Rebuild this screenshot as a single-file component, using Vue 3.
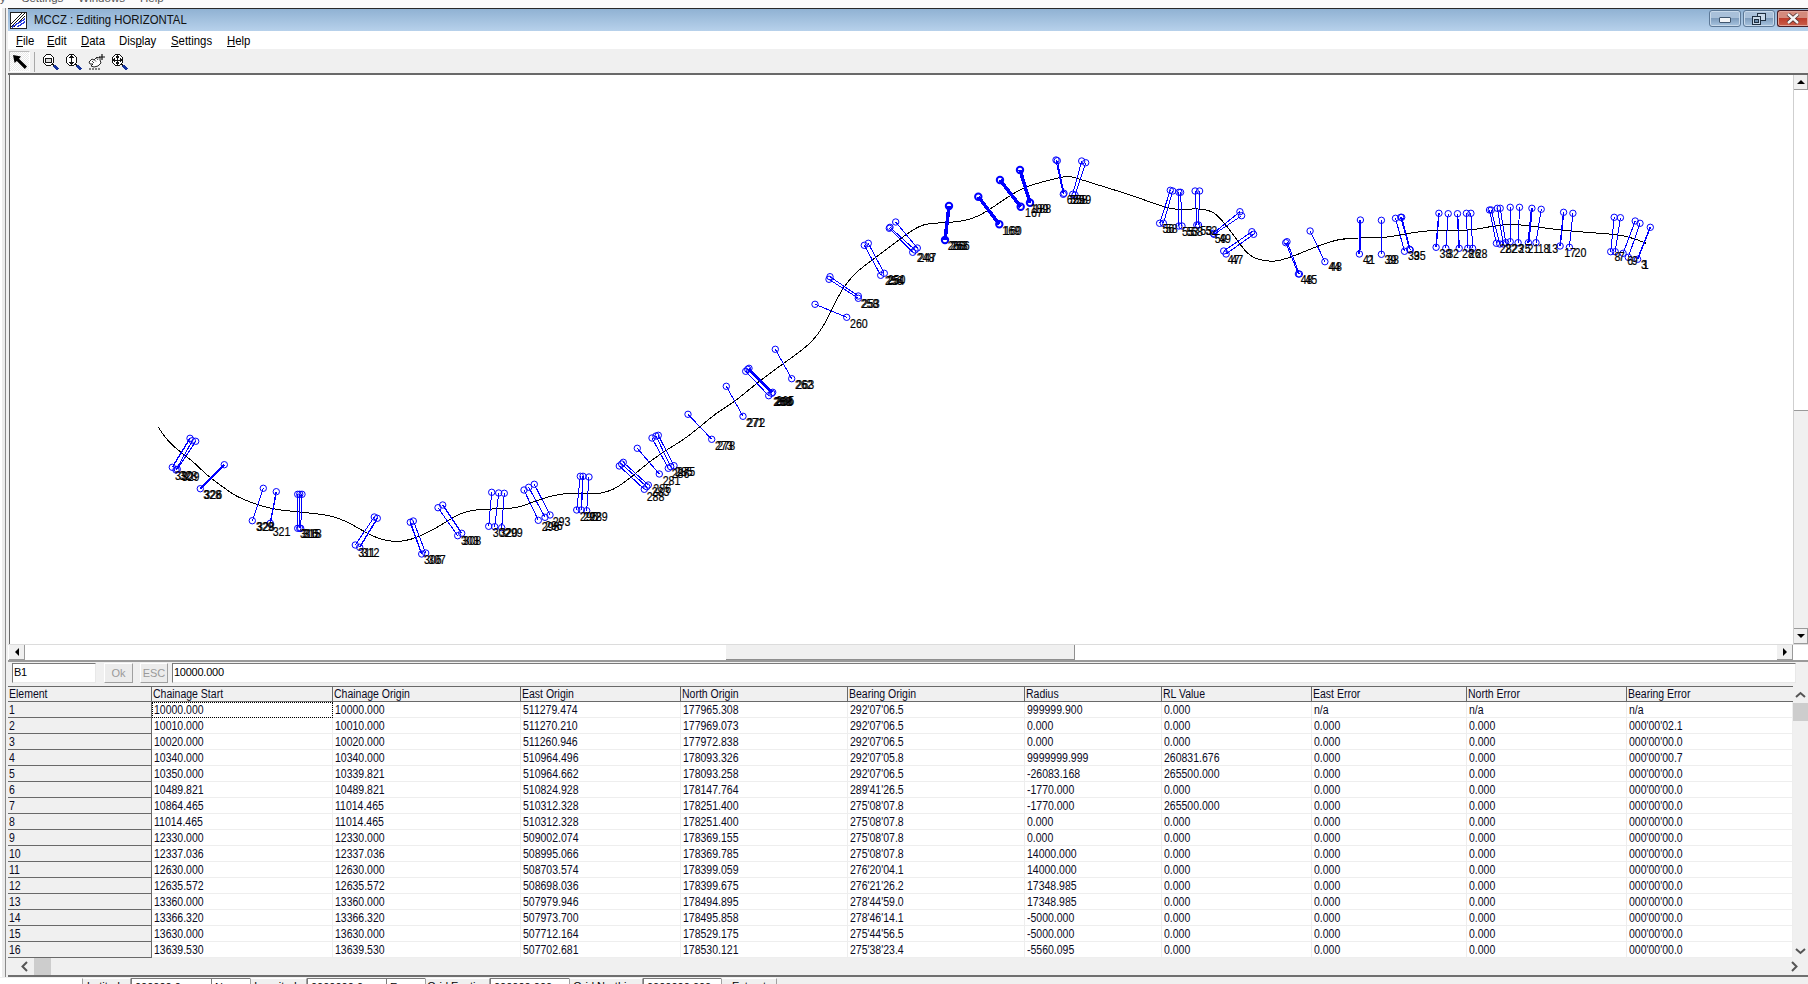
<template>
  <div class="desk">
    <div class="parent-menu">
      <span class="pm-y">y</span>
      <span>Settings</span>
      <span>Windows</span>
      <span>Help</span>
    </div>

    <div class="mdi">
      <div class="mdi-edge"></div>
      <div class="win">
        <div class="titlebar">
          <svg class="app-icon" width="18" height="18" viewBox="0 0 18 18" shape-rendering="crispEdges">
            <rect x="1" y="1" width="16" height="16" fill="#fff" stroke="#222" />
            <path d="M2 13 13 2M2 16 16 2M5 16 16 5" stroke="#111" stroke-width="1.4" />
            <path d="M3 16 16 8M8 16 16 11" stroke="#2a3ee0" stroke-width="1.4" />
          </svg>
          <span class="title-text squish">MCCZ : Editing HORIZONTAL</span>
          <div class="caption-btns">
            <div class="cap-btn">
              <div class="cap-min"></div>
            </div>
            <div class="cap-btn">
              <svg width="14" height="12" viewBox="0 0 14 12" shape-rendering="crispEdges">
                <rect x="5.5" y="0.5" width="8" height="7" fill="#c8d8e8" stroke="#1f2f40" />
                <rect x="0.5" y="3.5" width="8" height="8" fill="#c8d8e8" stroke="#1f2f40" />
                <rect x="2.5" y="6.5" width="4" height="3" fill="#6d8cab" stroke="#1f2f40" />
              </svg>
            </div>
            <div class="cap-btn cap-close">
              <svg width="14" height="11" viewBox="0 0 14 11">
                <path d="M2 1 12 10M12 1 2 10" stroke="#4a2a2a" stroke-width="4" />
                <path d="M2 1 12 10M12 1 2 10" stroke="#f4f4f4" stroke-width="2.4" />
              </svg>
            </div>
          </div>
        </div>

        <div class="menubar">
          <span v-for="m in menus" :key="m.before + m.key + m.after" class="squish">{{ m.before }}<u>{{ m.key }}</u>{{ m.after }}</span>
        </div>

        <div class="toolbar">
          <div class="tool-pressed">
            <svg width="16" height="16" viewBox="0 0 16 16">
              <path d="M1 1 9 2.5 7 4.8 15 12.6 12.8 15 4.8 7 2.6 9Z" fill="#000" />
            </svg>
          </div>
          <div class="tool-sep"></div>
          <svg class="tool" width="18" height="18" viewBox="0 0 18 18" shape-rendering="crispEdges">
            <circle cx="6.5" cy="7" r="5.5" fill="#fff" stroke="#111" />
            <rect x="3.5" y="5" width="6" height="4" fill="#ddd" stroke="#111" />
            <path d="M10.5 11 12 12.5" stroke="#111" stroke-width="1.5" />
            <path d="M12 12.5 16 16.5" stroke="#14329c" stroke-width="3" />
          </svg>
          <svg class="tool" width="18" height="18" viewBox="0 0 18 18" shape-rendering="crispEdges">
            <circle cx="6.5" cy="7" r="5.5" fill="#fff" stroke="#111" />
            <path d="M6.5 3v8M4.5 5 6.5 3 8.5 5M4.5 9 6.5 11 8.5 9" fill="none" stroke="#111" />
            <path d="M10.5 11 12 12.5" stroke="#111" stroke-width="1.5" />
            <path d="M12 12.5 16 16.5" stroke="#14329c" stroke-width="3" />
          </svg>
          <svg class="tool" width="18" height="18" viewBox="0 0 18 18">
            <path d="M1 9 4 6 6 7 9 4 10 5 12 4 12 7 13 10 10 13 6 14 3 13 5 11 2 11Z" fill="#fff" stroke="#111" stroke-width=".9" />
            <path d="M4 8 6 10M6 6.5 8 8.5M8.5 5 10 7" stroke="#111" stroke-width=".8" />
            <path d="M1 16h11" stroke="#111" stroke-dasharray="2 1" />
            <path d="M14 1v6M11 4h6" stroke="#111" stroke-width="1.2" />
          </svg>
          <svg class="tool" width="18" height="18" viewBox="0 0 18 18" shape-rendering="crispEdges">
            <circle cx="6.5" cy="7" r="5.5" fill="#fff" stroke="#111" />
            <path d="M6.5 3v8M2.5 7h8M5 4.5 6.5 3 8 4.5M5 9.5 6.5 11 8 9.5M4 5.5 2.5 7 4 8.5M9 5.5 10.5 7 9 8.5" fill="none" stroke="#111" />
            <path d="M10.5 11 12 12.5" stroke="#111" stroke-width="1.5" />
            <path d="M12 12.5 16 16.5" stroke="#14329c" stroke-width="3" />
          </svg>
        </div>

        <div class="view-row">
          <svg class="canvas" viewBox="10 75 1783 569" width="1783" height="569">
            <path class="road" :d="roadPath" />
            <g v-for="(t, i) in ticks" :key="'t' + i">
              <line class="tick" :stroke-width="t.w" :x1="t.x1" :y1="t.y1" :x2="t.x2" :y2="t.y2" />
              <circle class="node" :stroke-width="t.nw" :cx="t.x1" :cy="t.y1" r="3.2" />
              <circle class="node" :stroke-width="t.nw" :cx="t.x2" :cy="t.y2" r="3.2" />
            </g>
            <text v-for="(l, i) in labels" :key="'l' + i" class="label" :transform="`translate(${l.x} ${l.y}) scale(.82 1)`">{{ l.t }}</text>
          </svg>
          <div class="vscroll">
            <div class="sb-btn"><i class="arrow-up"></i></div>
            <div class="vtrack-a"></div>
            <div class="vthumb"></div>
            <div class="sb-btn"><i class="arrow-down"></i></div>
          </div>
        </div>

        <div class="hscroll">
          <div class="sb-btn sb-h"><i class="arrow-left"></i></div>
          <div class="htrack htrack-a"></div>
          <div class="hthumb"></div>
          <div class="htrack"></div>
          <div class="sb-btn sb-h"><i class="arrow-right"></i></div>
        </div>

        <div class="edit-row">
          <input class="cell-name" type="text" value="B1" />
          <div class="mini-btn ok-btn">Ok</div>
          <div class="mini-btn esc-btn">ESC</div>
          <input class="cell-value" type="text" value="10000.000" />
        </div>

        <div class="grid-row">
          <table class="grid">
            <colgroup>
              <col v-for="c in colWidths" :key="c.name" :style="{ width: c.width + 'px' }" />
            </colgroup>
            <thead>
              <tr>
                <th v-for="c in colWidths" :key="c.name"><span class="squish">{{ c.name }}</span></th>
              </tr>
            </thead>
            <tbody>
              <tr v-for="(row, r) in rows" :key="row[0]">
                <td v-for="(val, i) in row" :key="i" :class="{ fixed: i === 0, focus: r === 0 && i === 1 }"><span class="squish">{{ val }}</span></td>
              </tr>
            </tbody>
          </table>
          <div class="grid-vscroll">
            <svg width="15" height="15" viewBox="0 0 15 15"><path d="M3 9 7.5 5 12 9" fill="none" stroke="#555" stroke-width="2" /></svg>
            <div class="grid-vthumb"></div>
            <div class="grid-vspace"></div>
            <svg width="15" height="15" viewBox="0 0 15 15"><path d="M3 6 7.5 10 12 6" fill="none" stroke="#555" stroke-width="2" /></svg>
          </div>
        </div>

        <div class="grid-hscroll">
          <svg width="18" height="17" viewBox="0 0 18 17"><path d="M11 4 6.5 8.5 11 13" fill="none" stroke="#555" stroke-width="2" /></svg>
          <div class="grid-hthumb"></div>
          <div class="grid-hspace"></div>
          <svg width="23" height="17" viewBox="0 0 23 17"><path d="M7 4 11.5 8.5 7 13" fill="none" stroke="#555" stroke-width="2" /></svg>
        </div>
      </div>
    </div>

    <div class="status">
      <div class="st-blank"></div>
      <template v-for="s in statusItems" :key="s.text">
        <div :class="s.kind" :style="{ width: s.width + 'px' }">{{ s.text }}</div>
      </template>
    </div>
  </div>
</template>

<script setup>
const menus = [
  { before: '', key: 'F', after: 'ile' },
  { before: '', key: 'E', after: 'dit' },
  { before: '', key: 'D', after: 'ata' },
  { before: 'Dis', key: 'p', after: 'lay' },
  { before: '', key: 'S', after: 'ettings' },
  { before: '', key: 'H', after: 'elp' }
]

const colWidths = [
  { name: 'Element', width: 144 },
  { name: 'Chainage Start', width: 181 },
  { name: 'Chainage Origin', width: 188 },
  { name: 'East Origin', width: 160 },
  { name: 'North Origin', width: 167 },
  { name: 'Bearing Origin', width: 177 },
  { name: 'Radius', width: 137 },
  { name: 'RL Value', width: 150 },
  { name: 'East Error', width: 155 },
  { name: 'North Error', width: 160 },
  { name: 'Bearing Error', width: 166 }
]

const rows = [
  ['1', '10000.000', '10000.000', '511279.474', '177965.308', "292'07'06.5", '999999.900', '0.000', 'n/a', 'n/a', 'n/a'],
  ['2', '10010.000', '10010.000', '511270.210', '177969.073', "292'07'06.5", '0.000', '0.000', '0.000', '0.000', "000'00'02.1"],
  ['3', '10020.000', '10020.000', '511260.946', '177972.838', "292'07'06.5", '0.000', '0.000', '0.000', '0.000', "000'00'00.0"],
  ['4', '10340.000', '10340.000', '510964.496', '178093.326', "292'07'05.8", '9999999.999', '260831.676', '0.000', '0.000', "000'00'00.7"],
  ['5', '10350.000', '10339.821', '510964.662', '178093.258', "292'07'06.5", '-26083.168', '265500.000', '0.000', '0.000', "000'00'00.0"],
  ['6', '10489.821', '10489.821', '510824.928', '178147.764', "289'41'26.5", '-1770.000', '0.000', '0.000', '0.000', "000'00'00.0"],
  ['7', '10864.465', '11014.465', '510312.328', '178251.400', "275'08'07.8", '-1770.000', '265500.000', '0.000', '0.000', "000'00'00.0"],
  ['8', '11014.465', '11014.465', '510312.328', '178251.400', "275'08'07.8", '0.000', '0.000', '0.000', '0.000', "000'00'00.0"],
  ['9', '12330.000', '12330.000', '509002.074', '178369.155', "275'08'07.8", '0.000', '0.000', '0.000', '0.000', "000'00'00.0"],
  ['10', '12337.036', '12337.036', '508995.066', '178369.785', "275'08'07.8", '14000.000', '0.000', '0.000', '0.000', "000'00'00.0"],
  ['11', '12630.000', '12630.000', '508703.574', '178399.059', "276'20'04.1", '14000.000', '0.000', '0.000', '0.000', "000'00'00.0"],
  ['12', '12635.572', '12635.572', '508698.036', '178399.675', "276'21'26.2", '17348.985', '0.000', '0.000', '0.000', "000'00'00.0"],
  ['13', '13360.000', '13360.000', '507979.946', '178494.895', "278'44'59.0", '17348.985', '0.000', '0.000', '0.000', "000'00'00.0"],
  ['14', '13366.320', '13366.320', '507973.700', '178495.858', "278'46'14.1", '-5000.000', '0.000', '0.000', '0.000', "000'00'00.0"],
  ['15', '13630.000', '13630.000', '507712.164', '178529.175', "275'44'56.5", '-5000.000', '0.000', '0.000', '0.000', "000'00'00.0"],
  ['16', '13639.530', '13639.530', '507702.681', '178530.121', "275'38'23.4", '-5560.095', '0.000', '0.000', '0.000', "000'00'00.0"]
]

const statusItems = [
  { kind: 'st-label', text: 'Latitude', width: 49 },
  { kind: 'st-input', text: '000000.0', width: 80 },
  { kind: 'st-input', text: 'N', width: 39 },
  { kind: 'st-label', text: 'Longitude', width: 57 },
  { kind: 'st-input', text: '0000000.0', width: 79 },
  { kind: 'st-input', text: 'E', width: 39 },
  { kind: 'st-label', text: 'Grid Easting', width: 65 },
  { kind: 'st-input', text: '000000.000', width: 79 },
  { kind: 'st-label', text: 'Grid Northing', width: 74 },
  { kind: 'st-input', text: '0000000.000', width: 78 },
  { kind: 'st-label', text: 'Extract', width: 56 }
]

// drawing data, each block measured in its own zoomed frame
const sheets = [
  {
    ox: 140, oy: 400, sx: 3,
    road: [[55, 82], [80, 120], [120, 155], [160, 185], [200, 225], [250, 262], [290, 290], [340, 310], [400, 328], [470, 335], [540, 342], [590, 352], [640, 375], [690, 405], [730, 420], [770, 425], [810, 420], [860, 400], [920, 365], [960, 340], [1010, 328], [1070, 327], [1130, 325], [1180, 305], [1240, 285], [1300, 278], [1370, 282]],
    ticks: [
      [150, 115, 97, 202, 1.4], [157, 122, 108, 210, 1], [167, 124, 112, 208, 1],
      [253, 194, 181, 266, 2],
      [370, 265, 337, 362, 1],
      [409, 275, 391, 370, 1.4],
      [473, 283, 473, 385, 1.4], [479, 283, 479, 385, 1.4], [486, 283, 482, 385, 1],
      [703, 351, 646, 435, 1], [712, 355, 659, 442, 1.4],
      [811, 367, 845, 462, 1.4], [820, 363, 857, 459, 1],
      [894, 323, 953, 407, 1], [908, 315, 965, 400, 1.4],
      [1055, 277, 1046, 379, 1], [1076, 279, 1064, 380, 1], [1093, 280, 1085, 383, 1],
      [1152, 270, 1195, 361, 1], [1166, 262, 1215, 352, 1], [1183, 253, 1230, 345, 1],
      [1321, 229, 1310, 330, 1], [1329, 229, 1324, 330, 1.4], [1347, 231, 1340, 332, 1]
    ],
    labels: [
      [105, 240, '330'], [118, 240, '328'], [125, 243, '329'],
      [190, 298, '328'], [193, 298, '326'],
      [348, 394, '329'], [351, 394, '328'], [398, 407, '321'],
      [480, 415, '316'], [487, 415, '315'], [492, 415, '318'],
      [655, 472, '311'], [665, 472, '312'],
      [852, 493, '306'], [864, 493, '307'],
      [963, 435, '303'], [970, 435, '308'],
      [1058, 410, '302'], [1080, 412, '320'], [1095, 412, '299'],
      [1205, 392, '298'], [1215, 390, '296'], [1238, 378, '293'],
      [1320, 362, '295'], [1330, 362, '292'], [1350, 362, '289']
    ]
  },
  {
    ox: 600, oy: 330, sx: 3,
    road: [[0, 490], [40, 480], [90, 445], [130, 410], [190, 365], [250, 330], [300, 290], [350, 248], [400, 218], [470, 160], [530, 115]],
    ticks: [
      [58, 408, 133, 478, 1], [70, 397, 145, 465, 1], [65, 402, 140, 470, 1],
      [112, 355, 178, 432, 1],
      [156, 324, 205, 415, 1], [168, 318, 212, 410, 1], [175, 316, 222, 407, 1],
      [264, 253, 335, 328, 1],
      [379, 169, 429, 259, 1],
      [437, 124, 506, 197, 1], [443, 118, 515, 190, 1], [447, 115, 518, 187, 1],
      [526, 58, 575, 146, 1]
    ],
    labels: [
      [140, 512, '288'], [155, 497, '283'], [160, 490, '286'],
      [188, 465, '281'],
      [215, 445, '286'], [225, 437, '285'], [232, 437, '275'],
      [345, 360, '273'], [352, 360, '278'],
      [438, 291, '271'], [442, 291, '272'],
      [520, 228, '269'], [523, 228, '268'], [526, 228, '266'], [529, 226, '265'],
      [585, 178, '262'], [589, 178, '263']
    ]
  },
  {
    ox: 800, oy: 140, sx: 3,
    road: [[10, 628], [40, 600], [70, 560], [100, 500], [130, 440], [175, 390], [230, 350], [290, 305], [340, 268], [380, 250], [450, 248], [510, 240], [560, 215], [610, 180], [670, 142], [730, 125], [780, 112], [810, 108], [840, 118], [960, 155]],
    ticks: [
      [45, 493, 140, 532, 1],
      [87, 418, 175, 475, 1], [90, 410, 175, 468, 1],
      [193, 316, 242, 406, 1], [205, 310, 253, 400, 1],
      [268, 265, 338, 337, 1], [287, 246, 352, 324, 1], [270, 262, 345, 330, 1],
      [447, 198, 435, 300, 3.5],
      [535, 170, 598, 253, 3.5],
      [600, 120, 662, 200, 3.5],
      [660, 90, 690, 188, 3.5],
      [768, 60, 790, 163, 1], [772, 62, 792, 160, 1], [845, 63, 818, 163, 1], [857, 68, 825, 165, 1]
    ],
    labels: [
      [150, 563, '260'],
      [182, 503, '258'], [186, 503, '253'],
      [255, 435, '256'], [260, 435, '254'], [263, 433, '250'],
      [350, 367, '248'], [355, 365, '247'],
      [443, 330, '268'], [450, 330, '263'], [456, 330, '266'],
      [607, 285, '169'], [612, 285, '160'],
      [675, 232, '167'], [692, 218, '189'], [700, 218, '188'],
      [800, 192, '629'], [810, 192, '558'], [820, 192, '559']
    ]
  },
  {
    ox: 1140, oy: 170, sx: 2.904,
    road: [[0, 85], [75, 113], [120, 120], [170, 115], [215, 125], [250, 165], [285, 215], [320, 262], [380, 277], [430, 265], [500, 235], [570, 208], [640, 203], [720, 203], [800, 185], [880, 180], [960, 182], [1040, 165], [1100, 163], [1180, 175], [1280, 186], [1370, 192], [1420, 200], [1470, 220]],
    ticks: [
      [88, 61, 57, 160, 1], [95, 63, 68, 160, 1],
      [113, 67, 113, 168, 1], [118, 67, 122, 168, 1],
      [160, 63, 165, 165, 1], [173, 63, 170, 165, 1],
      [290, 125, 213, 190, 1], [295, 137, 215, 193, 1],
      [325, 185, 243, 243, 1], [330, 193, 250, 252, 1],
      [423, 218, 460, 312, 1], [427, 215, 463, 312, 1],
      [494, 183, 537, 275, 1],
      [640, 150, 637, 252, 2],
      [701, 151, 701, 253, 1],
      [742, 145, 768, 244, 1], [757, 142, 783, 238, 1], [760, 142, 785, 240, 1],
      [868, 130, 860, 232, 1.5], [895, 131, 888, 235, 1], [922, 131, 927, 235, 1.5], [948, 130, 952, 235, 1], [961, 130, 966, 235, 1],
      [1015, 120, 1035, 220, 1], [1020, 120, 1045, 222, 1], [1038, 115, 1055, 222, 1], [1046, 115, 1062, 218, 1], [1075, 112, 1075, 215, 1], [1102, 112, 1098, 218, 1], [1138, 115, 1128, 218, 2], [1165, 118, 1150, 218, 1],
      [1230, 127, 1220, 228, 1.5], [1257, 130, 1247, 232, 1],
      [1377, 142, 1367, 245, 1], [1395, 143, 1380, 245, 1], [1438, 153, 1403, 250, 1], [1452, 160, 1418, 262, 1], [1482, 172, 1445, 268, 1.5]
    ],
    labels: [
      [65, 190, '56'], [75, 190, '58'],
      [122, 197, '55'], [135, 197, '53'], [148, 197, '58'],
      [175, 195, '53'], [190, 195, '52'],
      [217, 220, '59'], [230, 220, '49'],
      [255, 282, '47'], [265, 282, '47'],
      [467, 342, '48'], [480, 342, '45'],
      [547, 303, '44'], [552, 303, '48'],
      [648, 283, '41'], [660, 283, '2'],
      [710, 283, '39'], [718, 283, '38'],
      [778, 270, '39'], [795, 270, '35'],
      [870, 263, '38'], [892, 263, '32'], [935, 263, '28'], [955, 263, '26'], [975, 263, '28'],
      [1045, 250, '28'], [1060, 250, '22'], [1080, 248, '23'], [1100, 248, '25'], [1125, 248, '21'], [1155, 250, '18'], [1180, 250, '13'],
      [1232, 262, '17'], [1262, 262, '20'],
      [1378, 273, '8'], [1390, 273, '7'], [1415, 285, '6'], [1428, 285, '9'], [1455, 297, '3'], [1460, 297, '1']
    ]
  }
]

const px = (s, v) => +(s.ox + v / s.sx).toFixed(1)
const py = (s, v) => +(s.oy + v / 3).toFixed(1)

// quadratic through the midpoints, keeps the alignment from looking polygonal
const roadPts = sheets.flatMap(s => s.road.map(p => [px(s, p[0]), py(s, p[1])]))
const roadPath = roadPts.reduce((d, p, i) => {
  if (i === 0) return `M${p[0]} ${p[1]}`
  const next = roadPts[i + 1]
  if (!next) return `${d} L${p[0]} ${p[1]}`
  const mx = ((p[0] + next[0]) / 2).toFixed(1)
  const my = ((p[1] + next[1]) / 2).toFixed(1)
  return `${d} Q${p[0]} ${p[1]} ${mx} ${my}`
}, '')

const ticks = sheets.flatMap(s => s.ticks.map(t => ({
  x1: px(s, t[0]),
  y1: py(s, t[1]),
  x2: px(s, t[2]),
  y2: py(s, t[3]),
  w: t[4],
  nw: t[4] > 3 ? 2 : 1
})))

const labels = sheets.flatMap(s => s.labels.map(l => ({
  x: px(s, l[0]),
  y: py(s, l[1]),
  t: l[2]
})))
</script>

<style>
html,
body {
  margin: 0;
  background: #f0f0f0;
}
</style>

<style scoped>
.desk {
  width: 1808px;
  height: 984px;
  display: flex;
  flex-direction: column;
  overflow: hidden;
  font-family: "Liberation Sans", Arial, sans-serif;
  color: #000;
  background: #f0f0f0;
}

/* the screenshot's text is squeezed sideways, plain font sizes come out too short */
.squish {
  display: inline-block;
  transform: scaleX(0.875);
  transform-origin: left center;
  white-space: nowrap;
}

.parent-menu {
  height: 8px;
  flex: none;
  overflow: hidden;
  background: #fbfbfb;
  display: flex;
  font-size: 11.5px;
  line-height: 12px;
  color: #555;
}

.parent-menu span {
  margin-top: -8px;
  margin-right: 15px;
}

.parent-menu .pm-y {
  margin-right: 16px;
}

.mdi {
  height: 969px;
  flex: none;
  display: flex;
}

.mdi-edge {
  width: 6px;
  margin-right: 2px;
  flex: none;
  box-sizing: border-box;
  background: #ececec;
  border-right: 1px solid #8a8a8a;
  border-left: 2px solid #fff;
}

.win {
  width: 1800px;
  display: flex;
  flex-direction: column;
  border-top: 1px solid #2a2a2a;
  border-bottom: 2px solid #6f6f6f;
  box-sizing: border-box;
}

.titlebar {
  height: 22px;
  flex: none;
  display: flex;
  align-items: center;
  background: linear-gradient(#90b2d3, #b7d1eb);
}

.app-icon {
  margin-left: 1px;
  margin-right: 7px;
}

.title-text {
  font-size: 13px;
  line-height: 15px;
  margin-bottom: 2px;
  color: #111;
}

.caption-btns {
  margin-left: auto;
  display: flex;
  gap: 2px;
  align-self: flex-start;
  margin-top: 1px;
}

.cap-btn {
  width: 32px;
  height: 17px;
  box-sizing: border-box;
  border: 1px solid #5c7896;
  border-radius: 3px;
  background: linear-gradient(#a9c0d9 0 45%, #7f9dbd 50%, #a8c4df);
  display: flex;
  align-items: center;
  justify-content: center;
  box-shadow: inset 0 0 0 1px #c8d9ea;
}

.cap-btn.cap-close {
  width: 31px;
  border-color: #4b1d25;
  border-right: none;
  border-radius: 3px 0 0 3px;
  background: linear-gradient(#d48a7c 0 45%, #bf3d2c 50%, #c9604c);
  box-shadow: inset 0 0 0 1px #e2a397;
}

.cap-min {
  width: 10px;
  height: 4px;
  background: #f2f4f7;
  border: 1px solid #40566e;
  border-radius: 1px;
  margin-top: 2px;
}

.menubar {
  height: 18px;
  flex: none;
  box-sizing: border-box;
  background: #fff;
  display: grid;
  grid-template-columns: 31px 34px 38px 52px 56px 50px;
  align-items: center;
  padding: 1px 0 0 8px;
  font-size: 13px;
  line-height: 15px;
}

.toolbar {
  height: 24px;
  flex: none;
  box-sizing: border-box;
  background: #f0f0f0;
  display: flex;
  align-items: center;
  padding: 1px 0 0 1px;
}

.tool-pressed {
  width: 21px;
  height: 21px;
  box-sizing: border-box;
  display: flex;
  align-items: center;
  justify-content: center;
  border: 1px solid #bbb;
  border-right-color: #fff;
  border-bottom-color: #fff;
  background: repeating-conic-gradient(#fff 0 25%, #e8e8e8 0 50%) 0 0 / 2px 2px;
}

.tool-sep {
  width: 1px;
  height: 20px;
  margin: 0 7px 0 4px;
  background: #a8a8a8;
}

.tool {
  margin-right: 5px;
}

.view-row {
  height: 571px;
  flex: none;
  display: flex;
  box-sizing: border-box;
  border-top: 2px solid #696969;
}

.canvas {
  flex: none;
  display: block;
  margin-left: 1px;
  background: #fff;
  border-left: 1px solid #696969;
}

.road {
  fill: none;
  stroke: #000;
  stroke-width: 1;
  shape-rendering: crispEdges;
}

.tick {
  stroke: #0000ff;
  shape-rendering: crispEdges;
}

.node {
  fill: none;
  stroke: #0000ff;
}

.label {
  font-family: "Liberation Sans", Arial, sans-serif;
  font-size: 13px;
  fill: #000;
  stroke: #000;
  stroke-width: 0.2px;
}

.vscroll {
  flex: 1;
  display: flex;
  flex-direction: column;
  background: #fff;
  border-left: 1px solid #cfcfcf;
}

.sb-btn {
  height: 15px;
  flex: none;
  box-sizing: border-box;
  background: #f0f0f0;
  border-right: 1px solid #9a9a9a;
  border-bottom: 1px solid #9a9a9a;
  display: flex;
  align-items: center;
  justify-content: center;
}

.vtrack-a {
  height: 320px;
  flex: none;
}

.vthumb {
  flex: 1;
  background: #f0f0f0;
  border-top: 1px solid #9a9a9a;
  border-bottom: 1px solid #9a9a9a;
}

.arrow-up,
.arrow-down,
.arrow-left,
.arrow-right {
  width: 0;
  height: 0;
  border: 4px solid transparent;
}

.arrow-up {
  border-top: none;
  border-bottom-color: #000;
}

.arrow-down {
  border-bottom: none;
  border-top-color: #000;
}

.arrow-left {
  border-left: none;
  border-right-color: #000;
}

.arrow-right {
  border-right: none;
  border-left-color: #000;
}

.hscroll {
  height: 16px;
  flex: none;
  display: flex;
  padding-left: 1px;
  padding-right: 15px;
  box-sizing: border-box;
  background: #fff;
  border-top: 1px solid #dcdcdc;
}

.sb-h {
  width: 16px;
  height: 15px;
}

.htrack {
  flex: 1;
  background: #fff;
}

.htrack-a {
  flex: none;
  width: 701px;
}

.hthumb {
  width: 349px;
  flex: none;
  background: #f0f0f0;
  box-sizing: border-box;
  border-right: 1px solid #8f8f8f;
  border-bottom: 1px solid #8f8f8f;
}

.edit-row {
  height: 26px;
  flex: none;
  box-sizing: border-box;
  border-top: 2px solid #9a9a9a;
  display: flex;
  align-items: center;
  padding-left: 4px;
  background: #f0f0f0;
  padding-bottom: 3px;
}

.cell-name,
.cell-value {
  height: 20px;
  box-sizing: border-box;
  padding: 0 1px 2px;
  border: 1px solid #e8e8e8;
  border-top-color: #7a7a7a;
  border-left-color: #7a7a7a;
  background: #fff;
  font-family: "Liberation Sans", Arial, sans-serif;
  font-size: 11px;
  letter-spacing: -0.25px;
  outline: none;
}

.cell-name {
  width: 84px;
}

.cell-value {
  width: 1624px;
  margin-left: 4px;
}

.mini-btn {
  height: 20px;
  box-sizing: border-box;
  border: 1px solid #fff;
  border-right-color: #a0a0a0;
  border-bottom-color: #a0a0a0;
  background: #ececec;
  color: #9a9a9a;
  font-size: 11px;
  text-align: center;
  line-height: 18px;
}

.ok-btn {
  width: 29px;
  margin-left: 8px;
}

.esc-btn {
  width: 28px;
  margin-left: 7px;
}

.grid-row {
  height: 272px;
  flex: none;
  display: flex;
  overflow: hidden;
}

.grid {
  width: 1785px;
  table-layout: fixed;
  border-collapse: separate;
  border-spacing: 0;
  flex: none;
  font-size: 12px;
  color: #0a0a1e;
  background: #fff;
}

.grid th {
  height: 16px;
  box-sizing: border-box;
  padding: 0 0 0 1px;
  background: #f0f0f0;
  font-weight: normal;
  text-align: left;
  line-height: 13px;
  border-top: 1px solid #696969;
  border-bottom: 1px solid #696969;
  border-right: 1px solid #696969;
  overflow: hidden;
}

.grid th:last-child {
  border-right: none;
}

.grid td {
  height: 16px;
  box-sizing: border-box;
  padding: 0 0 0 2px;
  line-height: 14px;
  border-bottom: 1px solid #eeeeee;
  border-right: 1px solid #eeeeee;
  overflow: hidden;
}

.grid td.fixed {
  background: #f0f0f0;
  padding-left: 1px;
  border-bottom: 1px solid #696969;
  border-right: 1px solid #696969;
}

.grid td.focus {
  outline: 1px dotted #000;
  outline-offset: -1px;
}

.grid-vscroll {
  flex: 1;
  display: flex;
  flex-direction: column;
  background: #f0f0f0;
  padding-top: 2px;
}

.grid-vthumb {
  height: 18px;
  flex: none;
  background: #cdcdcd;
}

.grid-vspace {
  flex: 1;
}

.grid-hscroll {
  height: 16px;
  flex: none;
  display: flex;
  align-items: center;
  padding-left: 8px;
  background: #f0f0f0;
}

.grid-hthumb {
  width: 17px;
  height: 17px;
  flex: none;
  background: #cdcdcd;
}

.grid-hspace {
  flex: 1;
}

.status {
  flex: 1;
  display: flex;
  overflow: hidden;
  padding-top: 1px;
  font-size: 11px;
  line-height: 13px;
}

.st-blank {
  width: 82px;
  flex: none;
  background: #fff;
}

.st-label {
  flex: none;
  box-sizing: border-box;
  background: #f0f0f0;
  border-top: 1px solid #fff;
  border-left: 1px solid #a0a0a0;
  border-right: 1px solid #a0a0a0;
  padding-top: 1px;
  text-align: center;
}

.st-input {
  flex: none;
  box-sizing: border-box;
  background: #fff;
  border-top: 1px solid #7a7a7a;
  border-left: 1px solid #7a7a7a;
  padding: 2px 0 0 3px;
}
</style>
